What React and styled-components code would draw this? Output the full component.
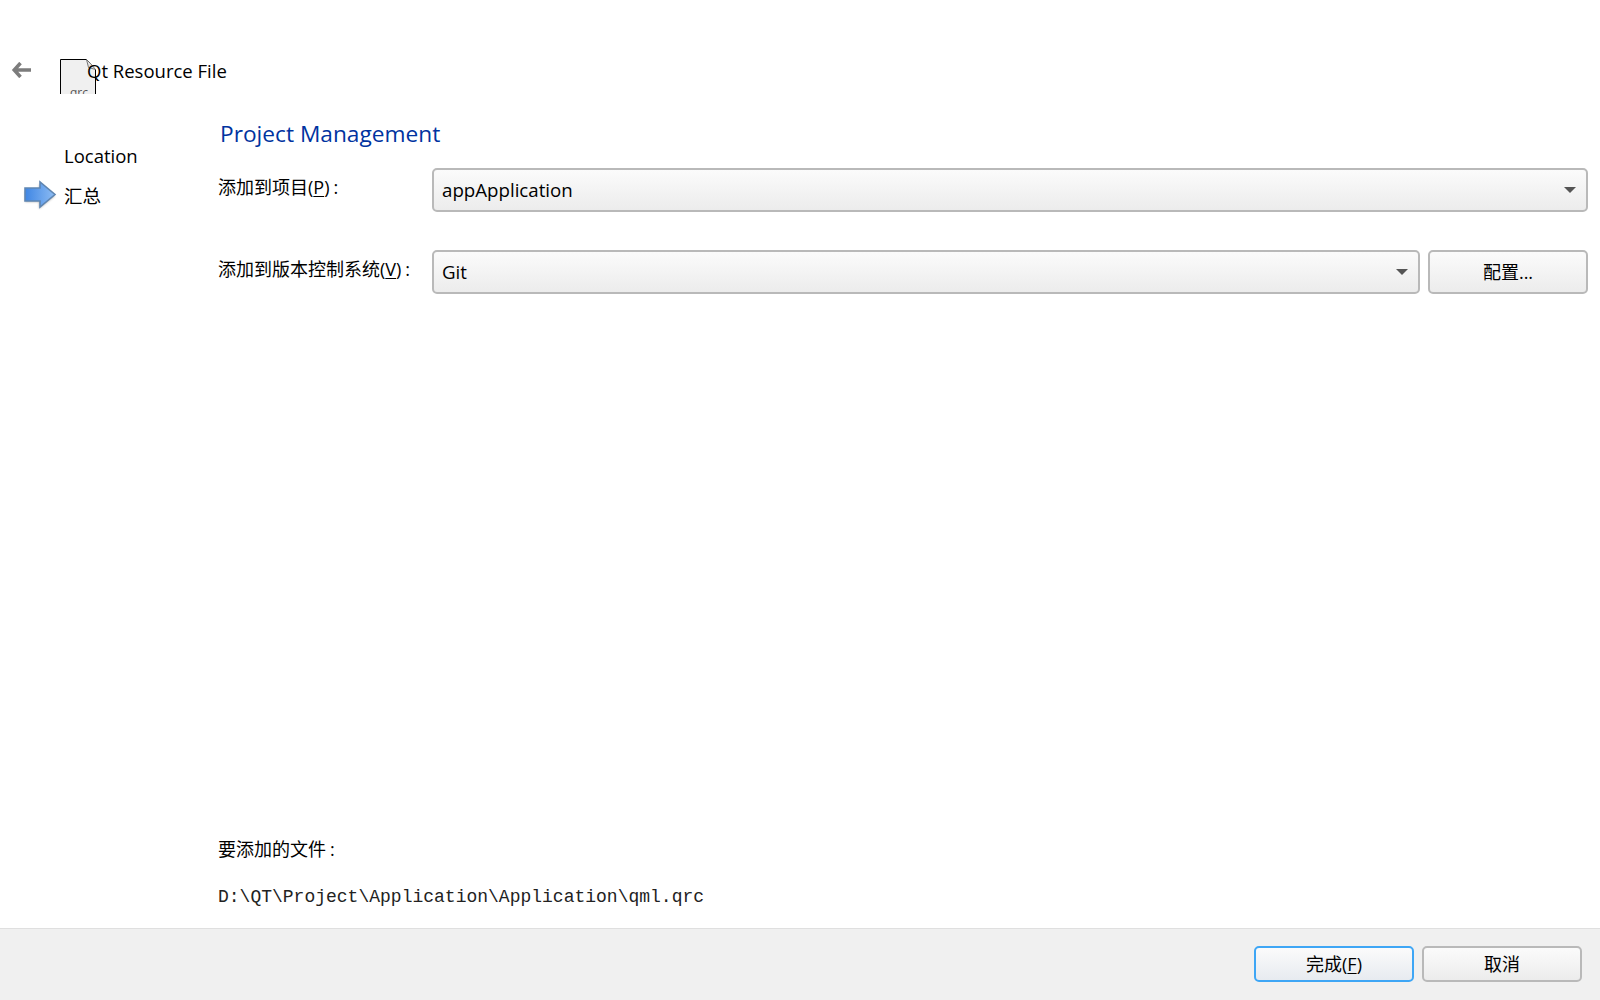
import styled, { createGlobalStyle } from 'styled-components';

const GlobalStyle = createGlobalStyle`
  html, body {
    margin: 0;
    padding: 0;
    background: #fff;
  }
`;

const uiFont = `"Open Sans", "Noto Sans CJK SC", sans-serif`;

const Page = styled.div`
  width: 1600px;
  height: 1000px;
  display: flex;
  flex-direction: column;
  overflow: hidden;
  font-family: ${uiFont};
  color: #000;
`;

const Header = styled.header`
  display: flex;
  align-items: flex-start;
  height: 59px;
  padding: 59px 0 0 11px;
`;

const BackButton = styled.svg`
  width: 20px;
  height: 16px;
  margin: 3px 29px 0 0;
  flex: none;
`;

const FileIcon = styled.svg`
  width: 37px;
  height: 35px;
  flex: none;
  margin-right: -10px;
`;

const HeaderTitle = styled.h1`
  position: relative;
  margin: 0;
  font-size: 18.5px;
  font-weight: 400;
  line-height: 24px;
`;

const Body = styled.div`
  flex: 1;
  display: flex;
  min-height: 0;
`;

const Sidebar = styled.nav`
  width: 218px;
  flex: none;
  display: flex;
  flex-direction: column;
  gap: 14px;
  padding-top: 24px;
`;

const Step = styled.div`
  display: flex;
  align-items: center;
  height: 26px;
  padding-left: 64px;
  font-size: 18.5px;
  position: relative;
`;

const StepArrow = styled.svg`
  position: absolute;
  left: 22px;
  top: -4px;
  width: 36px;
  height: 34px;
`;

const Content = styled.main`
  flex: 1;
  display: flex;
  flex-direction: column;
  padding: 0 12px 0 0;
  min-width: 0;
`;

const Heading = styled.h2`
  margin: 0 0 18px 2px;
  color: #0033a0;
  font-size: 22.7px;
  font-weight: 400;
  line-height: 32px;
`;

const FormRow = styled.div`
  display: flex;
  align-items: flex-start;
  height: 44px;
  margin-bottom: 38px;
`;

const FieldLabel = styled.label`
  width: 214px;
  flex: none;
  font-size: 18px;
  line-height: 38px;
  white-space: nowrap;
`;

const Mnemonic = styled.u`
  text-underline-offset: 2px;
  text-decoration-thickness: 1px;
`;

const Colon = styled.span`
  margin-left: 4px;
`;

const Select = styled.div`
  flex: 1;
  box-sizing: border-box;
  height: 44px;
  display: flex;
  align-items: center;
  justify-content: space-between;
  padding: 0 10px 1px 8px;
  border: 2px solid #b9b9b9;
  border-radius: 5px;
  background: linear-gradient(#fbfbfb, #ececec);
  font-size: 18.7px;
`;

const Caret = styled.span`
  width: 0;
  height: 0;
  margin-top: 1px;
  border-left: 6px solid transparent;
  border-right: 6px solid transparent;
  border-top: 6px solid #555;
`;

const Button = styled.button`
  box-sizing: border-box;
  width: 160px;
  flex: none;
  padding: 0 0 2px;
  border: 2px solid ${({ $primary }) => ($primary ? '#3ea6f5' : '#b9b9b9')};
  border-radius: 5px;
  background: linear-gradient(#fbfbfb, ${({ $primary }) => ($primary ? '#e7ebf0' : '#ececec')});
  color: #000;
  font-family: ${uiFont};
  font-size: 18px;
`;

const ConfigButton = styled(Button)`
  height: 44px;
  margin-left: 8px;
`;

const Spacer = styled.div`
  flex: 1;
`;

const FilesLabel = styled.div`
  font-size: 18px;
  line-height: 26px;
  margin-bottom: 23px;
`;

const FilePath = styled.div`
  font-family: "Liberation Mono", "Courier New", monospace;
  font-size: 18px;
  line-height: 24px;
  color: #222;
  margin-bottom: 19px;
`;

const Footer = styled.footer`
  box-sizing: border-box;
  height: 72px;
  flex: none;
  display: flex;
  justify-content: flex-end;
  align-items: flex-start;
  gap: 8px;
  padding: 17px 18px 0 0;
  background: #f0f0f0;
  border-top: 1px solid #dfdfdf;
`;

const FooterButton = styled(Button)`
  height: 36px;
`;

export default function App() {
  return (
    <>
      <GlobalStyle />
      <Page>
        <Header>
          <BackButton viewBox="0 0 20 16">
            <path d="M9.5 1 3.2 8l6.3 7M3.5 8H20" fill="none" stroke="#7c7c7c" strokeWidth="3.5" />
          </BackButton>
          <FileIcon viewBox="0 0 37 35">
            <path d="M.5 35V.5h26l9 10V35" fill="#f0f0f0" stroke="#000" />
            <path d="M26.5.5l2 8 7 2" fill="#e2e2e2" stroke="#777" />
            <text x="10" y="38" fontSize="12" fill="#555" fontFamily="Open Sans, sans-serif">qrc</text>
          </FileIcon>
          <HeaderTitle>Qt Resource File</HeaderTitle>
        </Header>
        <Body>
          <Sidebar>
            <Step>Location</Step>
            <Step>
              <StepArrow viewBox="0 0 36 34">
                <defs>
                  <linearGradient id="stepFill" x1="0" y1="0" x2="1" y2="0">
                    <stop offset="0" stopColor="#3f86e4" />
                    <stop offset="1" stopColor="#8dbcf3" />
                  </linearGradient>
                  <filter id="stepBlur" x="-20%" y="-20%" width="140%" height="140%">
                    <feGaussianBlur stdDeviation="1.2" />
                  </filter>
                </defs>
                <path d="M3 13h14V6l16 12-16 13v-7H3z" fill="#000" opacity=".28" filter="url(#stepBlur)" />
                <path d="M3 10h15V4l15 12.5L18 29v-6H3z" fill="url(#stepFill)" stroke="#5f86b2" strokeWidth="1.6" />
              </StepArrow>
              汇总
            </Step>
          </Sidebar>
          <Content>
            <Heading>Project Management</Heading>
            <FormRow>
              <FieldLabel>添加到项目(<Mnemonic>P</Mnemonic>)<Colon>:</Colon></FieldLabel>
              <Select>
                appApplication
                <Caret />
              </Select>
            </FormRow>
            <FormRow>
              <FieldLabel>添加到版本控制系统(<Mnemonic>V</Mnemonic>)<Colon>:</Colon></FieldLabel>
              <Select>
                Git
                <Caret />
              </Select>
              <ConfigButton>配置...</ConfigButton>
            </FormRow>
            <Spacer />
            <FilesLabel>要添加的文件<Colon>:</Colon></FilesLabel>
            <FilePath>D:\QT\Project\Application\Application\qml.qrc</FilePath>
          </Content>
        </Body>
        <Footer>
          <FooterButton $primary>完成(<Mnemonic>F</Mnemonic>)</FooterButton>
          <FooterButton>取消</FooterButton>
        </Footer>
      </Page>
    </>
  );
}
